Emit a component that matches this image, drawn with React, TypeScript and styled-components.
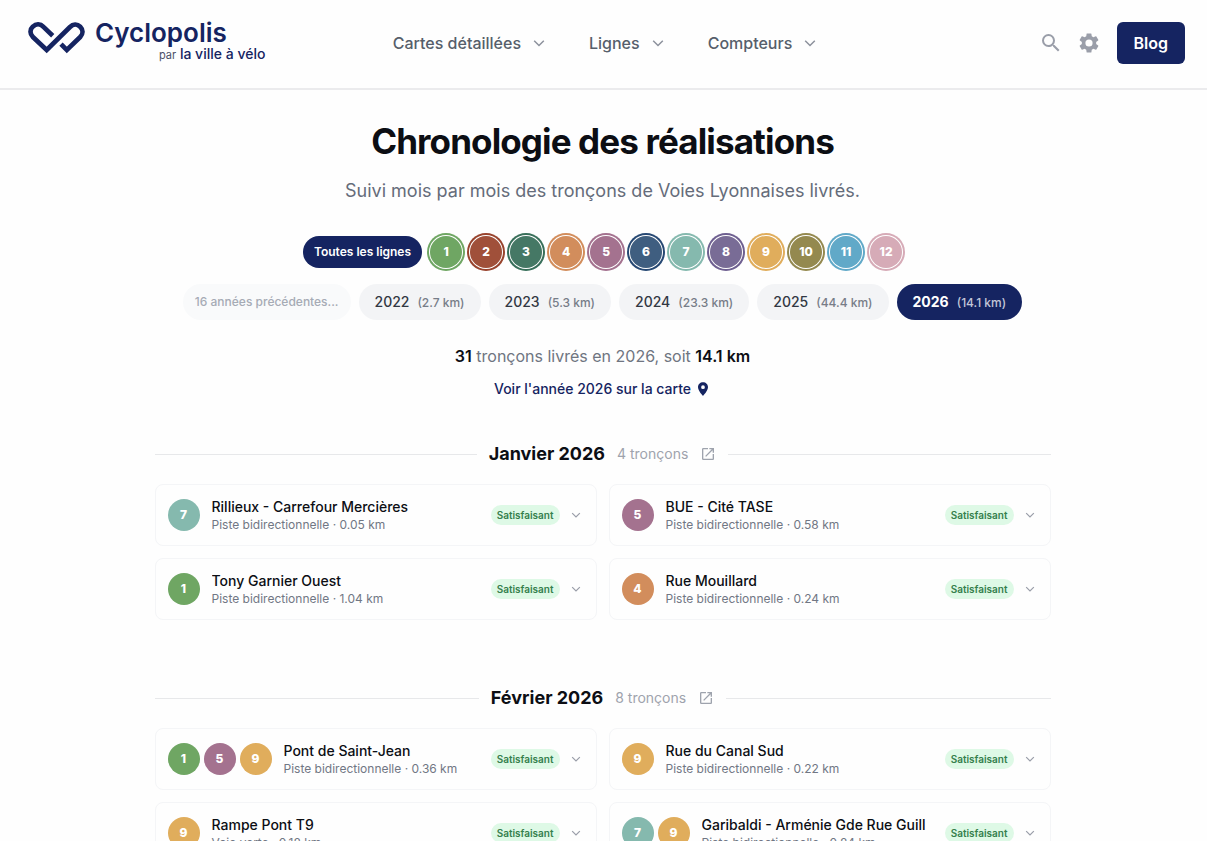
import React from "react";
import styled, { createGlobalStyle } from "styled-components";

const NAVY = "#152461";

const LINE_COLORS: Record<number, string> = {
  1: "#6fa663",
  2: "#a0503a",
  3: "#457865",
  4: "#d28d5c",
  5: "#a4728f",
  6: "#3f5e80",
  7: "#85b9ae",
  8: "#796c96",
  9: "#e0ad5c",
  10: "#94894f",
  11: "#61a9c8",
  12: "#d6abb7",
};

const RING_COLORS: Record<number, string> = {
  ...LINE_COLORS,
  2: "#98432d",
  3: "#386f5a",
  6: "#264873",
  8: "#6e5f90",
};

const GlobalStyle = createGlobalStyle`
  *, *::before, *::after { box-sizing: border-box; }
  body {
    margin: 0;
    background: #fefefe;
    color: #0c0e14;
    font-family: Inter, "Liberation Sans", sans-serif;
    font-size: 16px;
    line-height: 24px;
    -webkit-font-smoothing: antialiased;
  }
  button { font: inherit; border: 0; background: none; padding: 0; cursor: pointer; }
  a { color: inherit; text-decoration: none; }
  h1, h2, h3, p, ul { margin: 0; padding: 0; }
  ul { list-style: none; }
  svg { display: block; flex: none; }
`;

const Header = styled.header`
  display: grid;
  grid-template-columns: 1fr auto 1fr;
  align-items: center;
  height: 90px;
  padding: 0 22px 2px 28px;
  border-bottom: 2px solid #ebebed;
`;

const Logo = styled.a`
  display: flex;
  align-items: flex-start;
  justify-self: start;
  gap: 10px;
  color: ${NAVY};
`;

const LogoWords = styled.span`
  display: flex;
  flex-direction: column;
`;

const LogoName = styled.span`
  font-size: 26px;
  line-height: 22px;
  font-weight: 600;
`;

const LogoTagline = styled.span`
  padding-left: 64px;
  font-size: 14px;
  line-height: 20px;
  font-weight: 500;
  white-space: nowrap;
`;

const LogoBy = styled.small`
  font-size: 11px;
  font-weight: 400;
  color: #4c5068;
`;

const Nav = styled.nav`
  display: flex;
  gap: 40px;
`;

const NavItem = styled.button`
  display: flex;
  align-items: center;
  gap: 8px;
  font-weight: 500;
  color: #565e6b;

  svg {
    color: #8d929d;
  }
`;

const Tools = styled.div`
  display: flex;
  align-items: center;
  justify-self: end;
  gap: 16px;
`;

const IconButtons = styled.div`
  display: flex;
  gap: 14px;
`;

const IconButton = styled.button`
  color: #9a9ea9;
`;

const BlogLink = styled.a`
  padding: 9px 17px;
  border-radius: 6px;
  background: ${NAVY};
  color: #fff;
  font-weight: 600;
`;

const Main = styled.main`
  display: flex;
  flex-direction: column;
  align-items: center;
  padding: 31px 26px 0 24px;
`;

const Title = styled.h1`
  font-size: 35px;
  line-height: 40px;
  font-weight: 700;
  letter-spacing: -0.025em;
  text-align: center;
`;

const Subtitle = styled.p`
  margin-top: 16px;
  font-size: 18px;
  line-height: 28px;
  color: #656c7a;
  text-align: center;
`;

const LineFilters = styled.div`
  display: flex;
  flex-wrap: wrap;
  justify-content: center;
  gap: 8px;
  margin-top: 31px;
`;

const AllLines = styled.button`
  height: 32px;
  padding: 0 11px;
  border-radius: 16px;
  background: ${NAVY};
  color: #fff;
  font-size: 12px;
  font-weight: 600;
`;

const LineDot = styled.span<{ $line: number }>`
  display: flex;
  flex: none;
  align-items: center;
  justify-content: center;
  width: 32px;
  height: 32px;
  border-radius: 50%;
  background: ${(p) => LINE_COLORS[p.$line]};
  color: #fff;
  font-size: 12px;
  font-weight: 800;
`;

const LineFilter = styled(LineDot)`
  box-shadow: 0 0 0 1px #fff, 0 0 0 3px ${(p) => RING_COLORS[p.$line]};
`;

const Years = styled.div`
  display: flex;
  flex-wrap: wrap;
  justify-content: center;
  gap: 8px;
  margin-top: 16px;
`;

const Year = styled.button<{ $active?: boolean }>`
  height: 36px;
  padding: 0 16px;
  border-radius: 18px;
  background: ${(p) => (p.$active ? NAVY : "#f3f4f6")};
  color: ${(p) => (p.$active ? "#fff" : "#323843")};
  font-size: 14px;
  font-weight: ${(p) => (p.$active ? 700 : 500)};
`;

const YearLength = styled.span<{ $active?: boolean }>`
  margin-left: 8px;
  font-size: 12px;
  font-weight: 500;
  color: ${(p) => (p.$active ? "#c3c7d8" : "#777d88")};
`;

const EarlierYears = styled.button`
  height: 36px;
  padding: 0 12px;
  border-radius: 18px;
  background: #f9fafb;
  color: #a6abb5;
  font-size: 12px;
  font-weight: 500;
`;

const Summary = styled.p`
  margin-top: 24px;
  color: #6f7581;

  strong {
    font-weight: 600;
    color: #0c0e14;
  }
`;

const MapLink = styled.a`
  display: flex;
  align-items: center;
  gap: 4px;
  margin-top: 11px;
  font-size: 14px;
  line-height: 20px;
  font-weight: 500;
  color: ${NAVY};
`;

const Timeline = styled.div`
  display: flex;
  flex-direction: column;
  gap: 64px;
  width: 100%;
  max-width: 896px;
  margin-top: 41px;
`;

const MonthHeader = styled.header`
  display: flex;
  align-items: center;
  gap: 12px;

  &::before,
  &::after {
    content: "";
    flex: 1;
    height: 1px;
    background: #e7e8ea;
  }
`;

const MonthName = styled.h2`
  font-size: 18px;
  line-height: 28px;
  font-weight: 700;
`;

const MonthCount = styled.span`
  font-size: 14px;
  color: #9ea3ad;
`;

const MonthLink = styled.a`
  color: #9ea3ad;
`;

const Grid = styled.ul`
  display: grid;
  grid-template-columns: repeat(auto-fit, minmax(400px, 1fr));
  gap: 12px;
  margin-top: 16px;
`;

const Card = styled.button`
  display: flex;
  align-items: center;
  gap: 12px;
  width: 100%;
  height: 62px;
  padding: 0 12px;
  border: 1px solid #f4f5f7;
  border-radius: 8px;
  text-align: left;
`;

const Dots = styled.span`
  display: flex;
  gap: 4px;
`;

const CardText = styled.span`
  display: flex;
  flex: 1;
  flex-direction: column;
  min-width: 0;
`;

const CardName = styled.span`
  overflow: hidden;
  font-size: 14px;
  line-height: 20px;
  font-weight: 500;
  color: #0c0e14;
  white-space: nowrap;
  text-overflow: ellipsis;
`;

const CardDetail = styled.span`
  font-size: 12px;
  line-height: 16px;
  color: #717784;
`;

const CardEnd = styled.span`
  display: flex;
  align-items: center;
  gap: 8px;
  color: #9a9ea9;
`;

const Status = styled.span`
  padding: 1px 6px;
  border-radius: 10px;
  background: #def9e6;
  color: #35804d;
  font-size: 10px;
  line-height: 18px;
  font-weight: 600;
`;

function Chevron({ size }: { size: number }) {
  return (
    <svg width={size} height={size} viewBox="0 0 20 20" fill="none" stroke="currentColor" strokeWidth="1.5" aria-hidden="true">
      <path d="M5.200 7.700l4.800 4.800 4.800-4.800" />
    </svg>
  );
}

function LogoMark() {
  return (
    <svg width="57" height="34" viewBox="0 0 57 34" fill="none" stroke="currentColor" strokeWidth="4.700" aria-hidden="true">
      <path d="M24.700 13.700L15.500 4.900C12.400 1.700 7.900 1.700 4.900 4.600C1.700 7.500 1.700 11.900 4.900 15L18.700 28L42 5C45 2 49.200 1.800 52.200 4.700C55.300 7.700 55.200 11.900 52.200 15L38.800 28L33 22.200" />
    </svg>
  );
}

type Segment = { lines: number[]; name: string; detail: string };
type Month = { name: string; count: string; segments: Segment[] };

const YEARS = [
  { year: "2022", length: "2.7 km" },
  { year: "2023", length: "5.3 km" },
  { year: "2024", length: "23.3 km" },
  { year: "2025", length: "44.4 km" },
  { year: "2026", length: "14.1 km", active: true },
];

const MONTHS: Month[] = [
  {
    name: "Janvier 2026",
    count: "4 tronçons",
    segments: [
      { lines: [7], name: "Rillieux - Carrefour Mercières", detail: "Piste bidirectionnelle · 0.05 km" },
      { lines: [5], name: "BUE - Cité TASE", detail: "Piste bidirectionnelle · 0.58 km" },
      { lines: [1], name: "Tony Garnier Ouest", detail: "Piste bidirectionnelle · 1.04 km" },
      { lines: [4], name: "Rue Mouillard", detail: "Piste bidirectionnelle · 0.24 km" },
    ],
  },
  {
    name: "Février 2026",
    count: "8 tronçons",
    segments: [
      { lines: [1, 5, 9], name: "Pont de Saint-Jean", detail: "Piste bidirectionnelle · 0.36 km" },
      { lines: [9], name: "Rue du Canal Sud", detail: "Piste bidirectionnelle · 0.22 km" },
      { lines: [9], name: "Rampe Pont T9", detail: "Voie verte · 0.18 km" },
      { lines: [7, 9], name: "Garibaldi - Arménie Gde Rue Guill", detail: "Piste bidirectionnelle · 0.84 km" },
    ],
  },
];

export default function App() {
  return (
    <>
      <GlobalStyle />
      <Header>
        <Logo href="#">
          <LogoMark />
          <LogoWords>
            <LogoName>Cyclopolis</LogoName>
            <LogoTagline>
              <LogoBy>par</LogoBy> la ville à vélo
            </LogoTagline>
          </LogoWords>
        </Logo>
        <Nav>
          {["Cartes détaillées", "Lignes", "Compteurs"].map((label) => (
            <NavItem key={label}>
              {label}
              <Chevron size={20} />
            </NavItem>
          ))}
        </Nav>
        <Tools>
          <IconButtons>
            <IconButton aria-label="Rechercher">
              <svg width="24" height="24" viewBox="0 0 24 24" fill="currentColor">
                <path d="M15.5 14h-.79l-.28-.27A6.47 6.47 0 0 0 16 9.5 6.5 6.5 0 1 0 9.5 16c1.61 0 3.09-.59 4.23-1.57l.27.28v.79l5 4.99L20.49 19l-4.99-5zm-6 0C7.01 14 5 11.99 5 9.5S7.01 5 9.5 5 14 7.01 14 9.5 11.99 14 9.5 14z" />
              </svg>
            </IconButton>
            <IconButton aria-label="Paramètres">
              <svg width="24" height="24" viewBox="0 0 24 24" fill="currentColor">
                <path d="M19.14 12.94c.04-.3.06-.61.06-.94 0-.32-.02-.64-.07-.94l2.03-1.58a.49.49 0 0 0 .12-.61l-1.92-3.32a.488.488 0 0 0-.59-.22l-2.39.96c-.5-.38-1.03-.7-1.62-.94l-.36-2.54a.484.484 0 0 0-.48-.41h-3.84c-.24 0-.43.17-.47.41l-.36 2.54c-.59.24-1.13.57-1.62.94l-2.39-.96c-.22-.08-.47 0-.59.22L2.74 8.87c-.12.21-.08.47.12.61l2.03 1.58c-.05.3-.09.63-.09.94s.02.64.07.94l-2.03 1.58a.49.49 0 0 0-.12.61l1.92 3.32c.12.22.37.29.59.22l2.39-.96c.5.38 1.03.7 1.62.94l.36 2.54c.05.24.24.41.48.41h3.84c.24 0 .44-.17.47-.41l.36-2.54c.59-.24 1.13-.56 1.62-.94l2.39.96c.22.08.47 0 .59-.22l1.92-3.32c.12-.22.07-.47-.12-.61l-2.01-1.58zM12 15.6A3.6 3.6 0 1 1 12 8.4a3.6 3.6 0 0 1 0 7.2z" />
              </svg>
            </IconButton>
          </IconButtons>
          <BlogLink href="#">Blog</BlogLink>
        </Tools>
      </Header>
      <Main>
        <Title>Chronologie des réalisations</Title>
        <Subtitle>Suivi mois par mois des tronçons de Voies Lyonnaises livrés.</Subtitle>
        <LineFilters>
          <AllLines>Toutes les lignes</AllLines>
          {Object.keys(LINE_COLORS).map((line) => (
            <LineFilter as="button" key={line} $line={Number(line)}>
              {line}
            </LineFilter>
          ))}
        </LineFilters>
        <Years>
          <EarlierYears>16 années précédentes...</EarlierYears>
          {YEARS.map(({ year, length, active }) => (
            <Year key={year} $active={active}>
              {year}
              <YearLength $active={active}>({length})</YearLength>
            </Year>
          ))}
        </Years>
        <Summary>
          <strong>31</strong> tronçons livrés en 2026, soit <strong>14.1 km</strong>
        </Summary>
        <MapLink href="#">
          Voir l'année 2026 sur la carte
          <svg width="16" height="16" viewBox="0 0 24 24" fill="currentColor" aria-hidden="true">
            <path d="M12 2C7.700 2 4.500 5.100 4.500 9.200c0 5.200 7.500 13 7.500 13s7.500-7.800 7.500-13C19.500 5.100 16.300 2 12 2zm0 10A2.800 2.800 0 1 1 12 6.400a2.800 2.800 0 0 1 0 5.600z" />
          </svg>
        </MapLink>
        <Timeline>
          {MONTHS.map((month) => (
            <section key={month.name}>
              <MonthHeader>
                <MonthName>{month.name}</MonthName>
                <MonthCount>{month.count}</MonthCount>
                <MonthLink href="#" aria-label={`Voir ${month.name} sur la carte`}>
                  <svg width="16" height="16" viewBox="0 0 24 24" fill="currentColor">
                    <path d="M19 19H5V5h7V3H5a2 2 0 0 0-2 2v14a2 2 0 0 0 2 2h14c1.100 0 2-.9 2-2v-7h-2v7zM14 3v2h3.590l-9.830 9.830 1.410 1.410L19 6.410V10h2V3h-7z" />
                  </svg>
                </MonthLink>
              </MonthHeader>
              <Grid>
                {month.segments.map((segment) => (
                  <li key={segment.name}>
                    <Card>
                      <Dots>
                        {segment.lines.map((line) => (
                          <LineDot key={line} $line={line}>
                            {line}
                          </LineDot>
                        ))}
                      </Dots>
                      <CardText>
                        <CardName>{segment.name}</CardName>
                        <CardDetail>{segment.detail}</CardDetail>
                      </CardText>
                      <CardEnd>
                        <Status>Satisfaisant</Status>
                        <Chevron size={16} />
                      </CardEnd>
                    </Card>
                  </li>
                ))}
              </Grid>
            </section>
          ))}
        </Timeline>
      </Main>
    </>
  );
}
